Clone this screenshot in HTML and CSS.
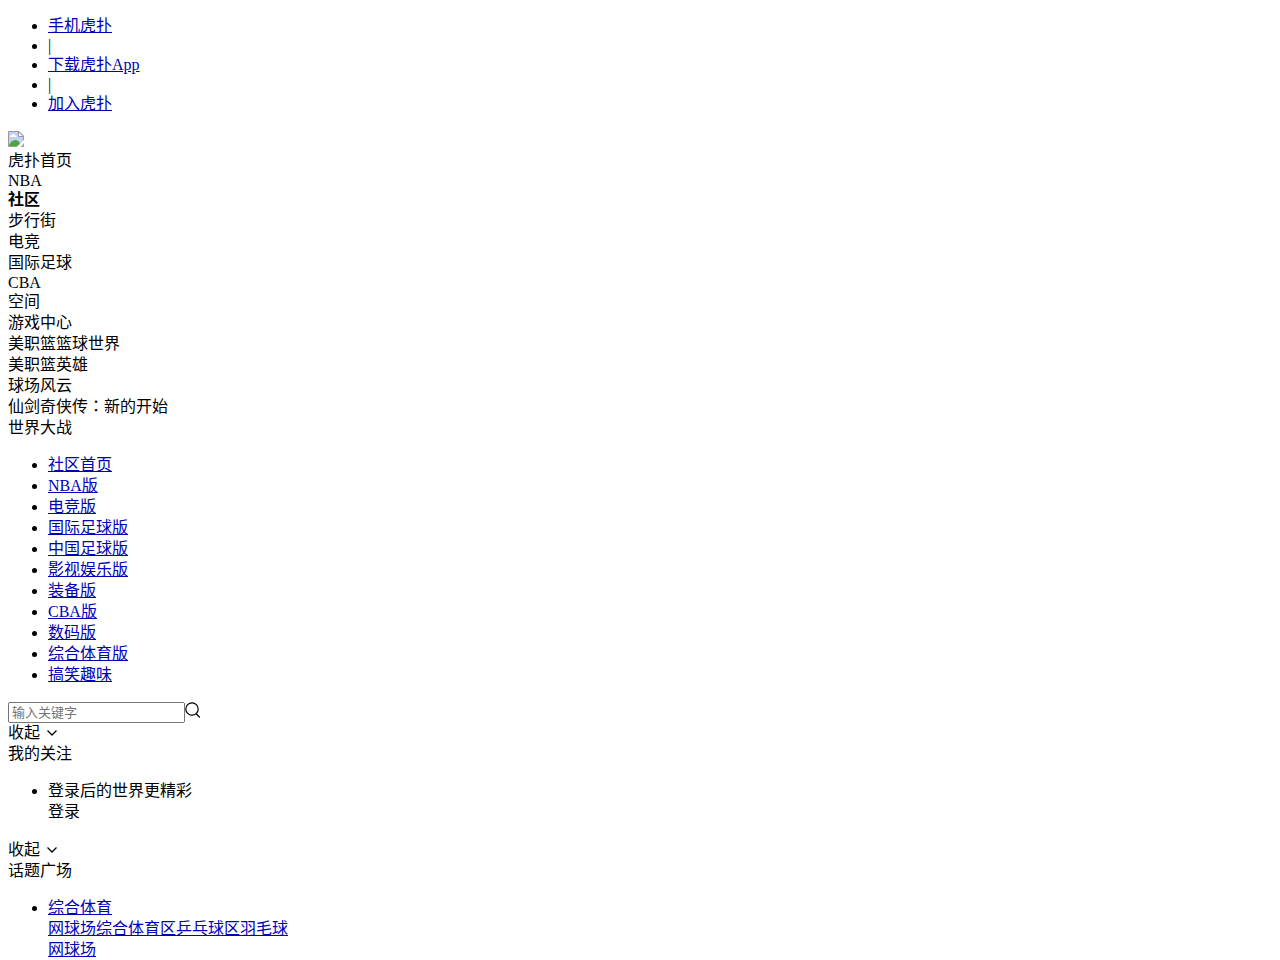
FILE: index.html
```html
<!DOCTYPE html>
<html lang="zh-CN">
<head>
    <meta charset="UTF-8">
    <meta name="viewport" content="width=device-width, initial-scale=1.0">
    <title>虎扑社区</title>
    <link rel="stylesheet" href="styles.css">
</head>
<body>

    <ul class="list">
        <li><a href="#">手机虎扑</a></li>
        <li class="latin">|</li>
        <li><a href="#">下载虎扑App</a></li>
        <li class="latin">|</li>
        <li><a href="#">加入虎扑</a></li>
    </ul>

    <div class="logo">
        <svg width="16" height="16" viewBox="0 0 16 16">
            <path d="M0.5 0.5H11L15.5 5V15.5H0.5Z" fill="#c0d2f4" stroke="#9a9a9a"/>
            <path d="M2 6C2 4.500 3 4 4 4C5 2.500 7 3 7 4.500C8 4.500 8.500 5 8.500 6Z" fill="#fff"/>
            <path d="M1 15C2 11 5 9 8 9C10 9.500 12 11 13 15Z" fill="#4ea53b"/>
            <path d="M10.500 0.500V5.500H15.500Z" fill="#fff" stroke="#9a9a9a"/>
            <path d="M8.500 16L16 9V12L12.500 16Z" fill="#fff"/>
        </svg>
    </div>

    <!-- Main nav -->
    <div class="nav">
        <div>虎扑首页</div>
        <div class="latin">NBA</div>
        <div class="active">社区</div>
        <div>步行街</div>
        <div>电竞</div>
        <div>国际足球</div>
        <div class="latin">CBA</div>
        <div>空间</div>
        <div>游戏中心</div>
        <div>美职篮篮球世界</div>
        <div>美职篮英雄</div>
        <div>球场风云</div>
        <div>仙剑奇侠传<span class="colon" lang="zh-TW">：</span>新的开始</div>
        <div>世界大战</div>
    </div>

    <ul class="list">
        <li><a href="#">社区首页</a></li>
        <li><a href="#">NBA版</a></li>
        <li><a href="#">电竞版</a></li>
        <li><a href="#">国际足球版</a></li>
        <li><a href="#">中国足球版</a></li>
        <li><a href="#">影视娱乐版</a></li>
        <li><a href="#">装备版</a></li>
        <li><a href="#">CBA版</a></li>
        <li><a href="#">数码版</a></li>
        <li><a href="#">综合体育版</a></li>
        <li><a href="#">搞笑趣味</a></li>
    </ul>

    <form class="search">
        <input type="text" class="search-input" placeholder="输入关键字" aria-label="输入关键字">
        <button type="button" class="plain" aria-label="搜索">
            <svg width="16" height="16" viewBox="0 0 16 16" fill="none" stroke="#000" stroke-width="1.2">
                <circle cx="7" cy="7" r="6.2"/>
                <path d="M11 11.500L14.800 15.500"/>
            </svg>
        </button>
    </form>

    <!-- Sidebar -->
    <div class="section">
        <button type="button" class="plain fold">收起
            <svg width="16" height="16" viewBox="0 0 16 16" fill="none" stroke="#000" stroke-width="1.3">
                <path d="M3.500 5.500L8 10L12.500 5.500"/>
            </svg>
        </button>
        <div>我的关注</div>
        <ul class="list">
            <li>
                <div>登录后的世界更精彩</div>
                <button type="button" class="plain">登录</button>
            </li>
        </ul>
    </div>

    <div class="section">
        <button type="button" class="plain fold">收起
            <svg width="16" height="16" viewBox="0 0 16 16" fill="none" stroke="#000" stroke-width="1.3">
                <path d="M3.500 5.500L8 10L12.500 5.500"/>
            </svg>
        </button>
        <div>话题广场</div>
        <ul class="list">
            <li>
                <div><a href="#">综合体育</a></div>
                <div><a href="#">网球场</a><a href="#">综合体育区</a><a href="#">乒乓球区</a><a href="#">羽毛球</a></div>
                <div><a href="#">网球场</a></div>
            </li>
        </ul>
    </div>

</body>
</html>
```
FILE: styles.css
```css
body {
    display: flow-root;
    margin: 0 8px;
    background: #fff;
    color: #000;
    font-family: "Liberation Serif", "Noto Sans CJK SC", serif;
    font-size: 16px;
    line-height: 21px;
}
a {
    color: #0000b8;
}
.list {
    margin: 16px 0;
    padding-left: 40px;
}
.list:first-child {
    margin-top: 15px;
}
.latin {
    margin: 1px 0 -1px;
    line-height: 18px;
}
.colon {
    font-family: "Noto Sans CJK TC", sans-serif;
    line-height: 1;
}
.logo {
    box-sizing: border-box;
    height: 20px;
    padding-top: 1px;
}
.logo svg {
    display: block;
}
.active {
    font-weight: bold;
}

/* Search box */
.search {
    display: flex;
    align-items: flex-start;
    box-sizing: border-box;
    height: 21px;
    padding-top: 1px;
}
.search-input {
    box-sizing: border-box;
    width: 177px;
    height: 21px;
    padding: 1px 2px;
    font-family: "Liberation Sans", "Noto Sans CJK SC", sans-serif;
    font-size: 13px;
}
.plain {
    display: block;
    margin: 0;
    padding: 0;
    border: none;
    background: none;
    color: inherit;
    font: inherit;
    cursor: pointer;
}
.fold {
    display: flex;
    align-items: center;
    gap: 4px;
}
.section + .section {
    padding-top: 1px;
}
```
